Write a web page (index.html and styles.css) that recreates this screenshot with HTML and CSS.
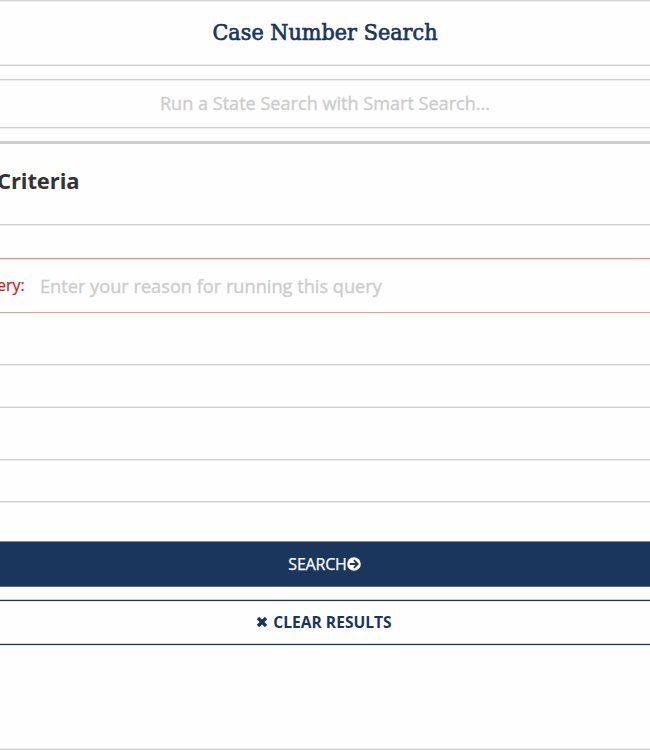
FILE: index.html
```html
<!DOCTYPE html>
<html lang="en">
<head>
<meta charset="utf-8">
<title>Case Number Search</title>
<link rel="stylesheet" href="styles.css">
</head>
<body>
<main class="page">
  <header class="title-bar"><h1 class="title">Case Number Search</h1></header>
  <div class="smart-search"><span class="smart-text">Run a State Search with Smart Search...</span></div>
  <section class="criteria"><h2 class="criteria-title">Criteria</h2></section>
  <div class="reason"><span class="reason-label">ery:</span><span class="reason-hint">Enter your reason for running this query</span></div>
  <div class="field"></div>
  <div class="field field-last"></div>
  <button class="btn btn-search"><span class="search-text">SEARCH</span><svg class="arrow" viewBox="0 0 14 14"><circle cx="7" cy="7" r="6.8" fill="#fff"/><path d="M2.7 7H10.4M6.9 3.2L10.7 7L6.9 10.8" fill="none" stroke="#1b365d" stroke-width="1.8"/></svg></button>
  <button class="btn btn-clear"><svg class="cross" viewBox="0 0 12 12"><path d="M2 2L10 10M10 2L2 10" fill="none" stroke="#1b365d" stroke-width="3.5"/></svg><span class="clear-text">CLEAR RESULTS</span></button>
</main>
</body>
</html>
```
FILE: styles.css
```css
* { box-sizing: border-box; }
body { margin: 0; background: #fefefe; font-family: "Open Sans", sans-serif; }
.page {
  display: flex;
  flex-direction: column;
  height: 750px;
  overflow: hidden;
  border-bottom: 1px solid #d0d0d0;
  box-shadow: inset 0 -1px #ececec;
}
.title-bar {
  height: 66px;
  display: flex;
  align-items: center;
  justify-content: center;
  padding-bottom: 2px;
  border-top: 1px solid #d8d8d8;
  border-bottom: 1px solid #cecece;
  box-shadow: inset 0 1px #eee, inset 0 -1px #eee;
}
.title {
  margin: 0;
  color: #1b365d;
  font: 400 23px/32px "DejaVu Serif Condensed", "DejaVu Serif", serif;
  font-stretch: condensed;
  letter-spacing: 0.05px;
  -webkit-text-stroke: 0.7px #1b365d;
  white-space: nowrap;
}
.smart-search {
  height: 49px;
  margin-top: 13px;
  padding-bottom: 2px;
  display: flex;
  align-items: center;
  justify-content: center;
  color: #ccc;
  border-top: 1px solid #cecece;
  border-bottom: 1px solid #cecece;
  box-shadow: inset 0 1px #eee, 0 1px #eee;
}
.smart-text { font-size: 18.1px; white-space: nowrap; -webkit-text-stroke: 0.35px #ccc; }
.criteria {
  height: 84px;
  margin-top: 13px;
  padding-top: 20px;
  border-top: 3px solid #cecece;
  border-bottom: 1px solid #cecece;
  box-shadow: 0 1px #eee;
}
.criteria-title { margin: 0 0 0 -3px; font-size: 22px; line-height: 32px; letter-spacing: -0.1px; color: #333; }
.reason {
  height: 55px;
  margin-top: 33px;
  display: flex;
  align-items: center;
  border-top: 1px solid #ee8c80;
  border-bottom: 1px solid #f2988c;
  box-shadow: inset 0 1px #eee4e6;
  white-space: nowrap;
}
.reason-label { width: 43px; margin-left: -3px; padding-bottom: 2px; font-size: 16px; color: #cc2222; -webkit-text-stroke: 0.25px #cc2222; }
.reason-hint { font-size: 18.2px; color: #ccc; -webkit-text-stroke: 0.35px #ccc; }
.field {
  height: 44px;
  margin-top: 51px;
  border-top: 1px solid #cecece;
  border-bottom: 1px solid #cecece;
  box-shadow: inset 0 1px #eee, inset 0 -1px #eee;
}
.field-last { height: 43px; box-shadow: inset 0 1px #eee, 0 1px #eee; }
.btn {
  display: flex;
  align-items: center;
  justify-content: center;
  width: 100%;
  padding: 0;
  border: 0;
  font-family: inherit;
  font-size: 16px;
}
.btn-search {
  height: 46px;
  margin-top: 39px;
  padding-right: 1px;
  color: #fff;
  background: #1b365d;
  border-top: 1px solid #7d8fa3;
  border-bottom: 1px solid #566b87;
}
.search-text { letter-spacing: -0.2px; -webkit-text-stroke: 0.25px #fff; }
.arrow { width: 14px; height: 14px; }
.btn-clear {
  height: 45px;
  margin-top: 13px;
  padding: 0 2px 1px 0;
  gap: 5px;
  color: #1b365d;
  background: #fefefe;
  border-top: 1px solid #1b365d;
  border-bottom: 1px solid #1b365d;
  box-shadow: 0 -1px #c8d0dc, inset 0 1px #e0e4ee, inset 0 -1px #cfdbe2, 0 1px #dbe6ec;
}
.cross { width: 12px; height: 12px; }
.clear-text { font-weight: 700; font-size: 15.6px; }
```
